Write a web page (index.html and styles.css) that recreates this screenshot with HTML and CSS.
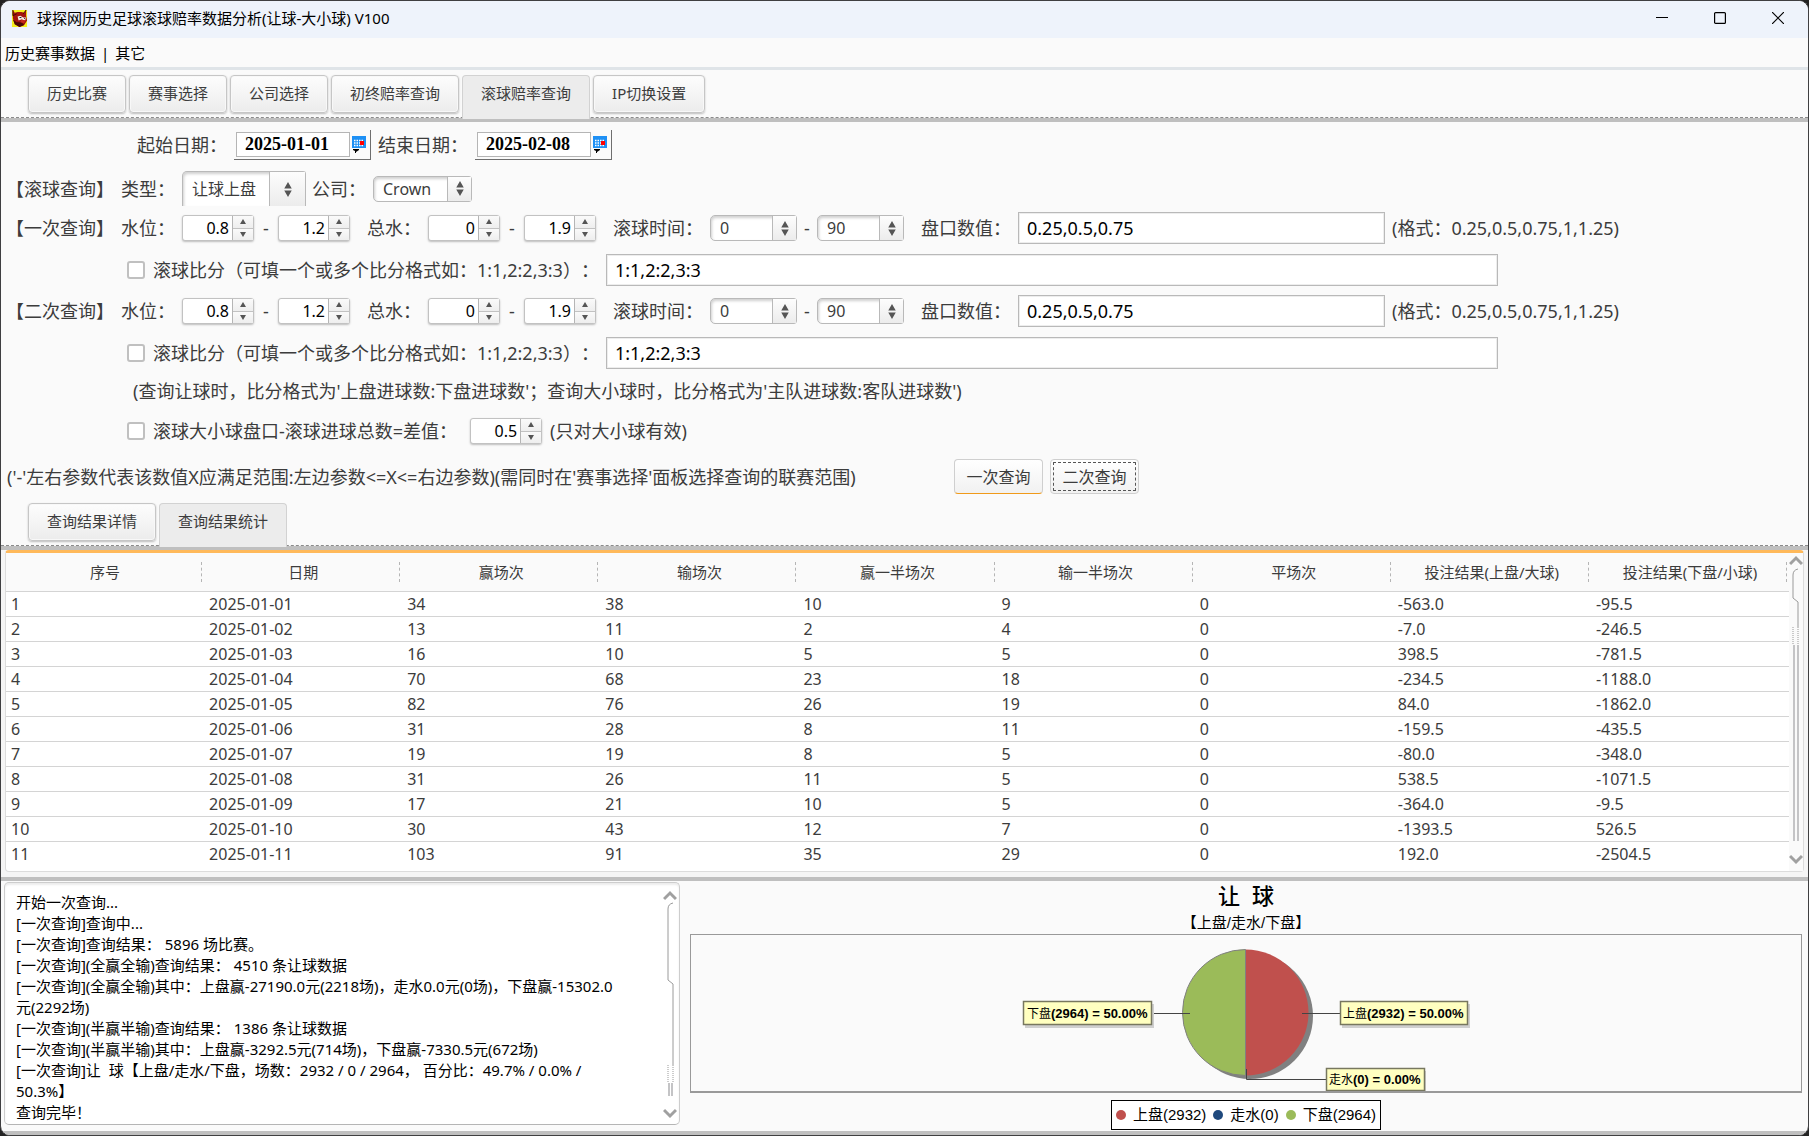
FILE: index.html
```html
<!DOCTYPE html>
<html lang="zh-CN">
<head>
    <meta charset="UTF-8">
    <meta name="viewport" content="width=device-width, initial-scale=1.0">
    <title>球探网历史足球滚球赔率数据分析(让球-大小球) V100</title>
    <link rel="stylesheet" href="styles.css">
</head>
<body>
    <svg class="defs" aria-hidden="true">
        <symbol id="updown" viewBox="0 0 8 16"><path d="M0 7L4 0L8 7ZM0 9H8L4 16Z"/></symbol>
        <symbol id="up" viewBox="0 0 6 5"><path d="M0 5L3 0L6 5Z"/></symbol>
        <symbol id="down" viewBox="0 0 6 5"><path d="M0 0H6L3 5Z"/></symbol>
        <symbol id="calendar" viewBox="0 0 14 17">
            <rect width="14" height="12" fill="#1e90f5"/>
            <path d="M2 4.500H12M2 7H12M2 9.500H12" stroke="#fff" stroke-width="1.500" stroke-dasharray="1.500 1"/>
            <rect x="8" y="5" width="4" height="4" fill="#f00"/>
            <path d="M1 13H7V14L4 16V17H3V15L1 14Z" fill="#000"/>
        </symbol>
    </svg>

    <div class="window">
        <header class="titlebar">
            <svg class="app-icon" viewBox="0 0 16 18" aria-hidden="true">
                <rect width="16" height="18" fill="#f4ef1c"/>
                <path d="M1 0L3 3L6 2H10L13 3L15 0L15 6L16 11L13 16L8 18L3 15L1 9Z" fill="#a3150c"/>
                <path d="M1 0L1 6L5 4M15 0L12 4" stroke="#3a0603" fill="none"/>
                <path d="M1 10L3 15L8 18L13 16L10 13L5 13Z" fill="#4a0a05"/>
                <path d="M6 7L9 6L12 8L15 8L14 11L10 10L7 11Z" fill="#f6e9e0"/>
                <path d="M10 10L14 11L13 14L9 13Z" fill="#c62a1b"/>
                <path d="M8 8H10M13 9H14" stroke="#111"/>
            </svg>
            <h1>球探网历史足球滚球赔率数据分析(让球-大小球) V100</h1>
            <div class="window-buttons">
                <button aria-label="最小化"><svg viewBox="0 0 12 12"><path d="M0 5.500H12"/></svg></button>
                <button aria-label="最大化"><svg viewBox="0 0 12 12"><rect x="0.600" y="0.600" width="10.800" height="10.800" rx="1"/></svg></button>
                <button aria-label="关闭"><svg viewBox="0 0 12 12"><path d="M0 0L12 12M12 0L0 12"/></svg></button>
            </div>
        </header>

        <nav class="menu">
            <a href="#">历史赛事数据</a><span>|</span><a href="#">其它</a>
        </nav>

        <div class="tabs">
            <button>历史比赛</button>
            <button>赛事选择</button>
            <button>公司选择</button>
            <button>初终赔率查询</button>
            <button class="active">滚球赔率查询</button>
            <button>IP切换设置</button>
        </div>

        <form class="query" onsubmit="return false">
            <div class="row date-row">
                <label for="startDate">起始日期：</label>
                <span class="date">
                    <input id="startDate" value="2025-01-01">
                    <button aria-label="选择日期"><svg><use href="#calendar"/></svg></button>
                </span>
                <label for="endDate">结束日期：</label>
                <span class="date">
                    <input id="endDate" value="2025-02-08">
                    <button aria-label="选择日期"><svg><use href="#calendar"/></svg></button>
                </span>
            </div>

            <div class="row type-row">
                <span>【滚球查询】</span>
                <label for="type">类型：</label>
                <span class="combo combo-type">
                    <select id="type"><option>让球上盘</option></select>
                    <span class="arrows"><svg><use href="#updown"/></svg></span>
                </span>
                <label for="company">公司：</label>
                <span class="combo combo-company">
                    <select id="company"><option>Crown</option></select>
                    <span class="arrows"><svg><use href="#updown"/></svg></span>
                </span>
            </div>

            <div class="row">
                <span>【一次查询】</span>
                <label for="water1">水位：</label>
                <span class="spinner"><input id="water1" value="0.8"><span><button aria-label="增加"><svg><use href="#up"/></svg></button><button aria-label="减少"><svg><use href="#down"/></svg></button></span></span>
                <i>-</i>
                <span class="spinner"><input aria-label="水位上限" value="1.2"><span><button aria-label="增加"><svg><use href="#up"/></svg></button><button aria-label="减少"><svg><use href="#down"/></svg></button></span></span>
                <label class="next" for="total1">总水：</label>
                <span class="spinner"><input id="total1" value="0"><span><button aria-label="增加"><svg><use href="#up"/></svg></button><button aria-label="减少"><svg><use href="#down"/></svg></button></span></span>
                <i>-</i>
                <span class="spinner"><input aria-label="总水上限" value="1.9"><span><button aria-label="增加"><svg><use href="#up"/></svg></button><button aria-label="减少"><svg><use href="#down"/></svg></button></span></span>
                <label class="next" for="time1">滚球时间：</label>
                <span class="combo"><select id="time1"><option>0</option></select><span class="arrows"><svg><use href="#updown"/></svg></span></span>
                <i class="narrow">-</i>
                <span class="combo"><select aria-label="滚球时间上限"><option>90</option></select><span class="arrows"><svg><use href="#updown"/></svg></span></span>
                <label class="next" for="handicap1">盘口数值：</label>
                <input class="text handicap" id="handicap1" value="0.25,0.5,0.75">
                <span>(格式：0.25,0.5,0.75,1,1.25)</span>
            </div>

            <div class="row score-row">
                <input type="checkbox" id="useScore1">
                <label for="useScore1">滚球比分（可填一个或多个比分格式如：1:1,2:2,3:3）：</label>
                <input class="text score" aria-label="滚球比分" value="1:1,2:2,3:3">
            </div>

            <div class="row">
                <span>【二次查询】</span>
                <label for="water2">水位：</label>
                <span class="spinner"><input id="water2" value="0.8"><span><button aria-label="增加"><svg><use href="#up"/></svg></button><button aria-label="减少"><svg><use href="#down"/></svg></button></span></span>
                <i>-</i>
                <span class="spinner"><input aria-label="水位上限" value="1.2"><span><button aria-label="增加"><svg><use href="#up"/></svg></button><button aria-label="减少"><svg><use href="#down"/></svg></button></span></span>
                <label class="next" for="total2">总水：</label>
                <span class="spinner"><input id="total2" value="0"><span><button aria-label="增加"><svg><use href="#up"/></svg></button><button aria-label="减少"><svg><use href="#down"/></svg></button></span></span>
                <i>-</i>
                <span class="spinner"><input aria-label="总水上限" value="1.9"><span><button aria-label="增加"><svg><use href="#up"/></svg></button><button aria-label="减少"><svg><use href="#down"/></svg></button></span></span>
                <label class="next" for="time2">滚球时间：</label>
                <span class="combo"><select id="time2"><option>0</option></select><span class="arrows"><svg><use href="#updown"/></svg></span></span>
                <i class="narrow">-</i>
                <span class="combo"><select aria-label="滚球时间上限"><option>90</option></select><span class="arrows"><svg><use href="#updown"/></svg></span></span>
                <label class="next" for="handicap2">盘口数值：</label>
                <input class="text handicap" id="handicap2" value="0.25,0.5,0.75">
                <span>(格式：0.25,0.5,0.75,1,1.25)</span>
            </div>

            <div class="row score-row">
                <input type="checkbox" id="useScore2">
                <label for="useScore2">滚球比分（可填一个或多个比分格式如：1:1,2:2,3:3）：</label>
                <input class="text score" aria-label="滚球比分" value="1:1,2:2,3:3">
            </div>

            <p class="row hint-row">(查询让球时，比分格式为'上盘进球数:下盘进球数'；查询大小球时，比分格式为'主队进球数:客队进球数')</p>

            <div class="row diff-row">
                <input type="checkbox" id="useDiff">
                <label for="useDiff">滚球大小球盘口-滚球进球总数=差值：</label>
                <span class="spinner"><input aria-label="差值" value="0.5"><span><button aria-label="增加"><svg><use href="#up"/></svg></button><button aria-label="减少"><svg><use href="#down"/></svg></button></span></span>
                <span>(只对大小球有效)</span>
            </div>

            <div class="row action-row">
                <span class="explain">('-'左右参数代表该数值X应满足范围:左边参数&lt;=X&lt;=右边参数)(需同时在'赛事选择'面板选择查询的联赛范围)</span>
                <button class="action primary">一次查询</button>
                <button class="action focused">二次查询</button>
            </div>
        </form>

        <div class="tabs">
            <button>查询结果详情</button>
            <button class="active">查询结果统计</button>
        </div>

        <section class="results">
            <div class="table-panel">
                <table>
                    <thead>
                        <tr><th>序号</th><th>日期</th><th>赢场次</th><th>输场次</th><th>赢一半场次</th><th>输一半场次</th><th>平场次</th><th>投注结果(上盘/大球)</th><th>投注结果(下盘/小球)</th></tr>
                    </thead>
                    <tbody>
                        <tr><td>1</td><td>2025-01-01</td><td>34</td><td>38</td><td>10</td><td>9</td><td>0</td><td>-563.0</td><td>-95.5</td></tr>
                        <tr><td>2</td><td>2025-01-02</td><td>13</td><td>11</td><td>2</td><td>4</td><td>0</td><td>-7.0</td><td>-246.5</td></tr>
                        <tr><td>3</td><td>2025-01-03</td><td>16</td><td>10</td><td>5</td><td>5</td><td>0</td><td>398.5</td><td>-781.5</td></tr>
                        <tr><td>4</td><td>2025-01-04</td><td>70</td><td>68</td><td>23</td><td>18</td><td>0</td><td>-234.5</td><td>-1188.0</td></tr>
                        <tr><td>5</td><td>2025-01-05</td><td>82</td><td>76</td><td>26</td><td>19</td><td>0</td><td>84.0</td><td>-1862.0</td></tr>
                        <tr><td>6</td><td>2025-01-06</td><td>31</td><td>28</td><td>8</td><td>11</td><td>0</td><td>-159.5</td><td>-435.5</td></tr>
                        <tr><td>7</td><td>2025-01-07</td><td>19</td><td>19</td><td>8</td><td>5</td><td>0</td><td>-80.0</td><td>-348.0</td></tr>
                        <tr><td>8</td><td>2025-01-08</td><td>31</td><td>26</td><td>11</td><td>5</td><td>0</td><td>538.5</td><td>-1071.5</td></tr>
                        <tr><td>9</td><td>2025-01-09</td><td>17</td><td>21</td><td>10</td><td>5</td><td>0</td><td>-364.0</td><td>-9.5</td></tr>
                        <tr><td>10</td><td>2025-01-10</td><td>30</td><td>43</td><td>12</td><td>7</td><td>0</td><td>-1393.5</td><td>526.5</td></tr>
                        <tr><td>11</td><td>2025-01-11</td><td>103</td><td>91</td><td>35</td><td>29</td><td>0</td><td>192.0</td><td>-2504.5</td></tr>
                    </tbody>
                </table>
                <svg class="scrollbar" viewBox="0 0 14 318" aria-hidden="true">
                    <path class="chevron" d="M1 11L7 5L13 11M1 303L7 309L13 303"/>
                    <path class="thumb" d="M9 16Q4 17 4 22V45L9 49V75"/>
                    <path class="grip" d="M9 76V92M4 74V92"/>
                    <path class="track" d="M5 92V288M9 92V288"/>
                </svg>
            </div>
        </section>

        <section class="bottom">
            <div class="log">
                <textarea readonly aria-label="查询日志">开始一次查询...
[一次查询]查询中...
[一次查询]查询结果： 5896 场比赛。
[一次查询](全赢全输)查询结果： 4510 条让球数据
[一次查询](全赢全输)其中：上盘赢-27190.0元(2218场)，走水0.0元(0场)，下盘赢-15302.0
元(2292场)
[一次查询](半赢半输)查询结果： 1386 条让球数据
[一次查询](半赢半输)其中：上盘赢-3292.5元(714场)，下盘赢-7330.5元(672场)
[一次查询]让  球【上盘/走水/下盘，场数：2932 / 0 / 2964， 百分比：49.7% / 0.0% /
50.3%】
查询完毕！</textarea>
                <svg class="scrollbar" viewBox="0 0 14 240" aria-hidden="true">
                    <path class="chevron" d="M1 16L7 10L13 16M1 227L7 233L13 227"/>
                    <path class="thumb" d="M10 20Q5 21 5 26V97L10 101V182"/>
                    <path class="grip" d="M10 182V200M5 182V200"/>
                    <path class="track" d="M6 200V213M9 200V213"/>
                </svg>
            </div>

            <div class="chart">
                <h2>让&nbsp; 球</h2>
                <h3>【上盘/走水/下盘】</h3>
                <div class="plot">
                    <svg width="450" height="156" viewBox="0 0 450 156">
                        <circle cx="229" cy="81" r="63" fill="#808080"/>
                        <path d="M224.500 14.500A63 63 0 0 1 224.500 140.500Z" fill="#c0504d"/>
                        <path d="M224.500 14.500A63 63 0 0 0 224.500 140.500Z" fill="#9bbb59" stroke="#808080"/>
                        <path class="leader" d="M131 78.500H169M281 78.500H319M225.500 134V144.500H305"/>

                        <rect class="label-shadow" x="4" y="69" width="129" height="24"/>
                        <rect class="label-box" x="2.500" y="66.500" width="128" height="23"/>
                        <text x="6" y="83">下盘<tspan>(2964) = 50.00%</tspan></text>

                        <rect class="label-shadow" x="321" y="69" width="128" height="24"/>
                        <rect class="label-box" x="319.500" y="66.500" width="127" height="23"/>
                        <text x="322" y="83">上盘<tspan>(2932) = 50.00%</tspan></text>

                        <rect class="label-shadow" x="307" y="136" width="98" height="20"/>
                        <rect class="label-box" x="305.500" y="133.500" width="98" height="22"/>
                        <text x="308" y="149">走水<tspan>(0) = 0.00%</tspan></text>
                    </svg>
                </div>
                <ul class="legend">
                    <li class="red">上盘(2932)</li>
                    <li class="blue">走水(0)</li>
                    <li class="green">下盘(2964)</li>
                </ul>
            </div>
        </section>
    </div>
</body>
</html>
```

FILE: styles.css
```css
* {
    box-sizing: border-box;
}
body {
    margin: 0;
    background: #232323;
    color: #3c3c3c;
    font-family: "Noto Sans", "Noto Sans CJK SC", sans-serif;
    font-size: 18px;
    line-height: 24px;
    text-spacing-trim: space-all;
}
h1, h2, h3, p, ul {
    margin: 0;
    padding: 0;
    font-weight: normal;
}
button, input, select, textarea {
    font: inherit;
    color: inherit;
    margin: 0;
    padding: 0;
    text-spacing-trim: space-all;
}
.defs {
    position: absolute;
    width: 0;
    height: 0;
}
.window {
    display: flex;
    flex-direction: column;
    min-height: 100vh;
    border: 1px solid #3f3f41;
    border-radius: 10px;
    background: #fafafa;
    overflow: hidden;
}

/* title bar and menu */
.titlebar {
    display: flex;
    align-items: center;
    height: 37px;
    padding: 0 1px 3px 10px;
    background: #eef3fb;
    color: #000;
}
.app-icon {
    width: 17px;
    height: 17px;
    margin-right: 9px;
}
.titlebar h1 {
    flex: 1;
    font-size: 15px;
}
.window-buttons {
    display: flex;
}
.window-buttons button {
    width: 58px;
    height: 32px;
    border: 0;
    background: none;
}
.window-buttons svg {
    display: block;
    width: 12px;
    height: 12px;
    margin: 0 auto;
    fill: none;
    stroke: #000;
    stroke-width: 1.2;
}
.menu {
    display: flex;
    align-items: center;
    gap: 6px;
    height: 32px;
    padding-left: 4px;
    border-bottom: 3px solid #dfe4e8;
    font-size: 15px;
}
.menu, .menu a {
    color: #000;
    text-decoration: none;
}

/* tabs */
.tabs {
    display: flex;
    align-items: flex-start;
    gap: 3px;
    height: 52px;
    padding: 5px 27px 0;
    background: linear-gradient(#bfbfbf, #bfbfbf) bottom / 100% 4px no-repeat;
    position: relative;
}
.tabs::before {
    content: "";
    position: absolute;
    left: 0;
    right: 0;
    bottom: 4px;
    border-top: 1px dashed #8a8a8a;
}
.tabs button {
    height: 38px;
    padding: 0 18px 2px;
    border: 1px solid #c6c6c6;
    border-radius: 4px;
    background: linear-gradient(#fdfdfd, #ececec);
    box-shadow: 0 1px 2px #bdbdbd, inset 0 0 0 1px #f8f8f8;
    font-size: 15px;
}
.tabs .active {
    position: relative;
    height: 44px;
    padding-bottom: 9px;
    border-color: #d2d2d2;
    border-bottom: 0;
    border-radius: 4px 4px 0 0;
    background: #ececec;
    box-shadow: none;
}

/* query form */
.row {
    display: flex;
    align-items: center;
    height: 38px;
    padding-left: 5px;
    white-space: nowrap;
}
.row > * {
    flex-shrink: 0;
    margin-right: 7px;
}
.row > .spinner, .row > .combo, .row > i {
    margin-right: 0;
}
.row > i {
    width: 24px;
    font-style: normal;
    text-align: center;
}
.row > .narrow {
    width: 20px;
}
.row > .next {
    margin-left: 17px;
}
.date-row {
    height: 46px;
    padding-left: 136px;
}
.type-row {
    height: 41px;
}
.type-row > .combo {
    margin-right: 6px;
}
.score-row {
    height: 45px;
    padding-left: 126px;
}
.hint-row {
    height: 32px;
    padding-left: 132px;
}
.diff-row {
    height: 48px;
    padding-left: 126px;
}
.diff-row > .spinner {
    margin: 0 8px 0 6px;
}
.action-row {
    height: 43px;
    padding-left: 6px;
}
.explain {
    flex: 0 1 940px;
}

.date {
    display: flex;
    width: 137px;
    height: 30px;
    padding: 2px 4px 2px 2px;
    border: solid #6e6e6e;
    border-width: 0 1px 1px 0;
}
.date input {
    flex: 1;
    min-width: 0;
    padding-left: 8px;
    border: 1px solid #b5b5b5;
    background: #fff;
    color: #000;
    font: bold 18px "Liberation Serif", serif;
}
.date button {
    width: 16px;
    border: 0;
    background: none;
}
.date svg {
    display: block;
    width: 14px;
    height: 17px;
    margin-left: 2px;
}

.combo {
    position: relative;
    width: 87px;
    height: 26px;
}
.combo select {
    width: 100%;
    height: 100%;
    padding-left: 9px;
    border: 1px solid #b9b9b9;
    border-radius: 5px 3px 3px 5px;
    background: #fff;
    box-shadow: inset 1px 2px 3px #d0d0d0;
    font-size: 16px;
    line-height: 22px;
    appearance: none;
}
.combo .arrows {
    position: absolute;
    top: 1px;
    right: 1px;
    bottom: 1px;
    display: flex;
    align-items: center;
    justify-content: center;
    width: 24px;
    border-left: 1px solid #b9b9b9;
    background: linear-gradient(#fdfdfd, #ececec);
    pointer-events: none;
}
.arrows svg {
    width: 8px;
    height: 15px;
    fill: #555;
}
.combo-company {
    width: 99px;
}
.combo-type {
    width: 124px;
    height: 35px;
}
.combo-type select {
    border-bottom: 0;
    border-radius: 5px 3px 0 0;
}
.combo-type .arrows {
    bottom: 0;
    width: 36px;
}

.spinner {
    display: flex;
    width: 72px;
    height: 26px;
    border: 1px solid #c2c2c2;
    border-radius: 3px;
    background: #fff;
    box-shadow: 0 1px 2px #bdbdbd;
}
.spinner input {
    flex: 1;
    min-width: 0;
    padding-right: 3px;
    border: 0;
    background: none;
    color: #000;
    font-size: 16px;
    text-align: right;
}
.spinner > span {
    display: flex;
    flex-direction: column;
    width: 21px;
    border-left: 1px solid #b5b5b5;
}
.spinner button {
    display: flex;
    flex: 1;
    align-items: center;
    justify-content: center;
    border: 0;
    background: linear-gradient(#fafafa, #eee);
}
.spinner button + button {
    border-top: 1px solid #c2c2c2;
}
.spinner svg {
    width: 6px;
    height: 5px;
    fill: #555;
}

.text {
    height: 32px;
    padding: 0 8px;
    border: 1px solid #b9b9b9;
    background: #fff;
    color: #000;
    box-shadow: inset 0 0 0 1px #ededed;
}
.handicap {
    width: 367px;
}
.score {
    flex: 0 1 892px;
}
input[type="checkbox"] {
    width: 18px;
    height: 18px;
    margin-right: 8px;
    border: 2px solid #c0c0c0;
    border-radius: 3px;
    background: #fff;
    appearance: none;
}

.action {
    width: 89px;
    height: 35px;
    border: 1px solid #cfcfcf;
    border-radius: 4px;
    background: linear-gradient(#fff, #f1f1f1);
    font-size: 16px;
}
.primary {
    border-bottom: 1px solid #f09a1a;
}
.focused {
    outline: 1px dashed #555;
    outline-offset: -4px;
}

/* result table */
.results {
    padding: 0 4px 5px;
    border-bottom: 4px solid #bfbfbf;
    background: #f5f5f5;
}
.table-panel {
    display: flex;
    height: 322px;
    border: 1px solid #dcdcdc;
    border-top: 3px solid #ffb95a;
    border-radius: 4px;
    background: #fff;
}
table {
    flex: 1;
    align-self: flex-start;
    width: 100%;
    table-layout: fixed;
    border-collapse: separate;
    border-spacing: 0;
}
th {
    position: relative;
    height: 39px;
    padding: 0;
    border-bottom: 1px solid #d4d4d4;
    background: #fafafa;
    font-size: 15px;
    font-weight: normal;
}
th::after {
    content: "";
    position: absolute;
    top: 9px;
    right: 2px;
    height: 20px;
    border-right: 1px dashed #b5b5b5;
}
td {
    height: 25px;
    padding: 0 5px;
    border-bottom: 1px solid #d4d4d4;
    font-size: 16px;
    line-height: 24px;
}
tbody tr:last-child td {
    border-bottom-color: transparent;
}
.scrollbar {
    flex: none;
    width: 14px;
    fill: none;
}
.table-panel .scrollbar {
    height: 318px;
    background: #fafafa;
}
.chevron {
    stroke: #a0a0a0;
    stroke-width: 3;
}
.thumb {
    stroke: #9a9a9a;
}
.grip {
    stroke: #9a9a9a;
    stroke-dasharray: 1 1;
}
.track {
    stroke: #c4c4c6;
    stroke-width: 2;
}

/* log and chart */
.bottom {
    display: flex;
    flex: 1;
    gap: 10px;
    padding: 1px 6px 0 3px;
    border-bottom: 4px solid #bfbfbf;
}
.log {
    display: flex;
    width: 676px;
    height: 243px;
    padding-right: 2px;
    border: 1px solid #cdcdcd;
    border-bottom-color: #b5b5b5;
    border-radius: 5px;
    background: #fff;
    box-shadow: inset 0 2px 2px #ececec;
}
.log textarea {
    flex: 1;
    padding: 9px 0 0 11px;
    border: 0;
    background: none;
    color: #000;
    font-size: 15px;
    line-height: 21px;
    overflow: hidden;
    resize: none;
    white-space: pre;
}
.log .scrollbar {
    height: 240px;
}
.chart {
    display: flex;
    flex: 1;
    flex-direction: column;
    align-items: center;
    color: #000;
    font-family: "Liberation Sans", "Noto Sans CJK SC", sans-serif;
}
.chart h2 {
    height: 30px;
    font-size: 22px;
    font-weight: 500;
    line-height: 30px;
}
.chart h3 {
    height: 22px;
    font-size: 15px;
    line-height: 22px;
}
.plot {
    display: flex;
    justify-content: center;
    width: 100%;
    height: 159px;
    border: 1px solid #999;
    border-bottom-width: 2px;
}
.plot text {
    font-size: 12px;
}
.plot tspan {
    font-size: 13px;
    font-weight: bold;
}
.leader {
    fill: none;
    stroke: #444;
}
.label-box {
    fill: #ffffc0;
    stroke: #77775f;
    stroke-width: 1.5;
}
.label-shadow {
    fill: #cfcfcf;
}
.legend {
    display: flex;
    gap: 7px;
    height: 30px;
    margin-top: 7px;
    padding: 0 4px;
    border: 1px solid #000;
    background: #fff;
    font-size: 15px;
    line-height: 28px;
    list-style: none;
}
.legend li::before {
    content: "";
    display: inline-block;
    width: 10px;
    height: 10px;
    margin-right: 7px;
    border-radius: 50%;
}
.legend .red::before {
    background: #c0504d;
}
.legend .blue::before {
    background: #1f497d;
}
.legend .green::before {
    background: #9bbb59;
}
```
